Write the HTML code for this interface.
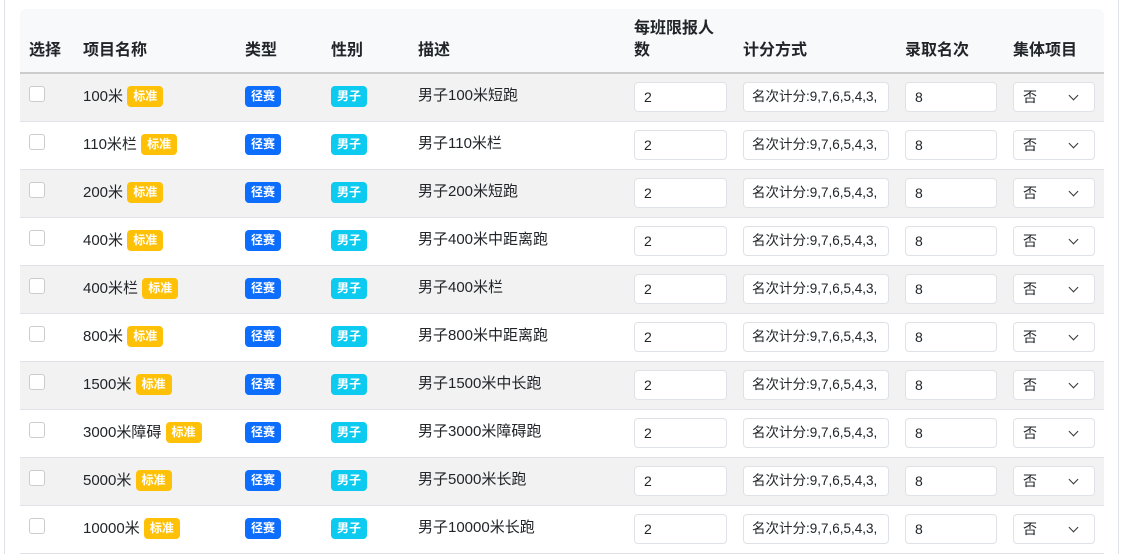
<!DOCTYPE html>
<html><head><meta charset="utf-8"><style>
*{box-sizing:border-box;margin:0;padding:0}
body{width:1126px;height:554px;overflow:hidden;background:#fff;font-family:"Liberation Sans","Noto Sans CJK SC",sans-serif;color:#212529;position:relative}
.lb{position:absolute;left:4px;top:0;width:1px;height:554px;background:#dee2e6}
.rb{position:absolute;left:1118px;top:0;width:1px;height:554px;background:#dee2e6}
.wrap{position:absolute;left:20px;top:9px;width:1084px}
.head{height:65px;background:#f8f9fa;border-radius:6px 6px 0 0;border-bottom:2px solid #ccc;position:relative;font-weight:bold;font-size:16px}
.head span{position:absolute;bottom:10px;line-height:22px}
.row{height:48px;border-bottom:1px solid #dee2e6;position:relative;font-size:15px}
.row.o{background:#f2f2f2}
.row>*{position:absolute}
.cb{left:9px;top:12px;width:16px;height:16px;border:1px solid #ccc;border-radius:3px;background:#fff}
.t{top:12px;line-height:20px}
.bd{display:inline-block;color:#fff;font-size:12px;font-weight:bold;border-radius:4px;height:21px;line-height:21px;padding:0 6px;vertical-align:1px}
.y{background:#ffc107}.b{background:#0d6efd}.c{background:#0dcaf0}
.in{top:8px;height:30px;border:1px solid #dee2e6;border-radius:4px;background:#fff;font-size:14px;line-height:28px;padding-left:9px}
.sel::after{content:"";position:absolute;right:17px;top:9px;width:6px;height:6px;border-right:1.5px solid #333;border-bottom:1.5px solid #333;transform:rotate(45deg)}
</style></head><body>
<div class="lb"></div><div class="rb"></div>
<div class="wrap">
<div class="head">
<span style="left:9px">选择</span><span style="left:63px">项目名称</span><span style="left:225px">类型</span><span style="left:311px">性别</span><span style="left:398px">描述</span><span style="left:614px">每班限报人<br>数</span><span style="left:723px">计分方式</span><span style="left:885px">录取名次</span><span style="left:993px">集体项目</span>
</div>
<div id="rows"></div>
</div>
<script>
var d=[["100米","男子100米短跑"],["110米栏","男子110米栏"],["200米","男子200米短跑"],["400米","男子400米中距离跑"],["400米栏","男子400米栏"],["800米","男子800米中距离跑"],["1500米","男子1500米中长跑"],["3000米障碍","男子3000米障碍跑"],["5000米","男子5000米长跑"],["10000米","男子10000米长跑"]];
var h="";d.forEach(function(r,i){h+='<div class="row'+(i%2==0?' o':'')+'"><div class="cb"></div><div class="t" style="left:63px">'+r[0]+' <span class="bd y">标准</span></div><div class="t" style="left:225px"><span class="bd b">径赛</span></div><div class="t" style="left:311px"><span class="bd c">男子</span></div><div class="t" style="left:398px">'+r[1]+'</div><div class="in" style="left:614px;width:93px">2</div><div class="in" style="left:723px;width:146px;font-size:13.5px;padding-left:8px;white-space:nowrap;overflow:hidden">名次计分:9,7,6,5,4,3,</div><div class="in" style="left:885px;width:92px">8</div><div class="in sel" style="left:993px;width:82px">否</div></div>'});
document.getElementById("rows").innerHTML=h;
</script>
</body></html>
